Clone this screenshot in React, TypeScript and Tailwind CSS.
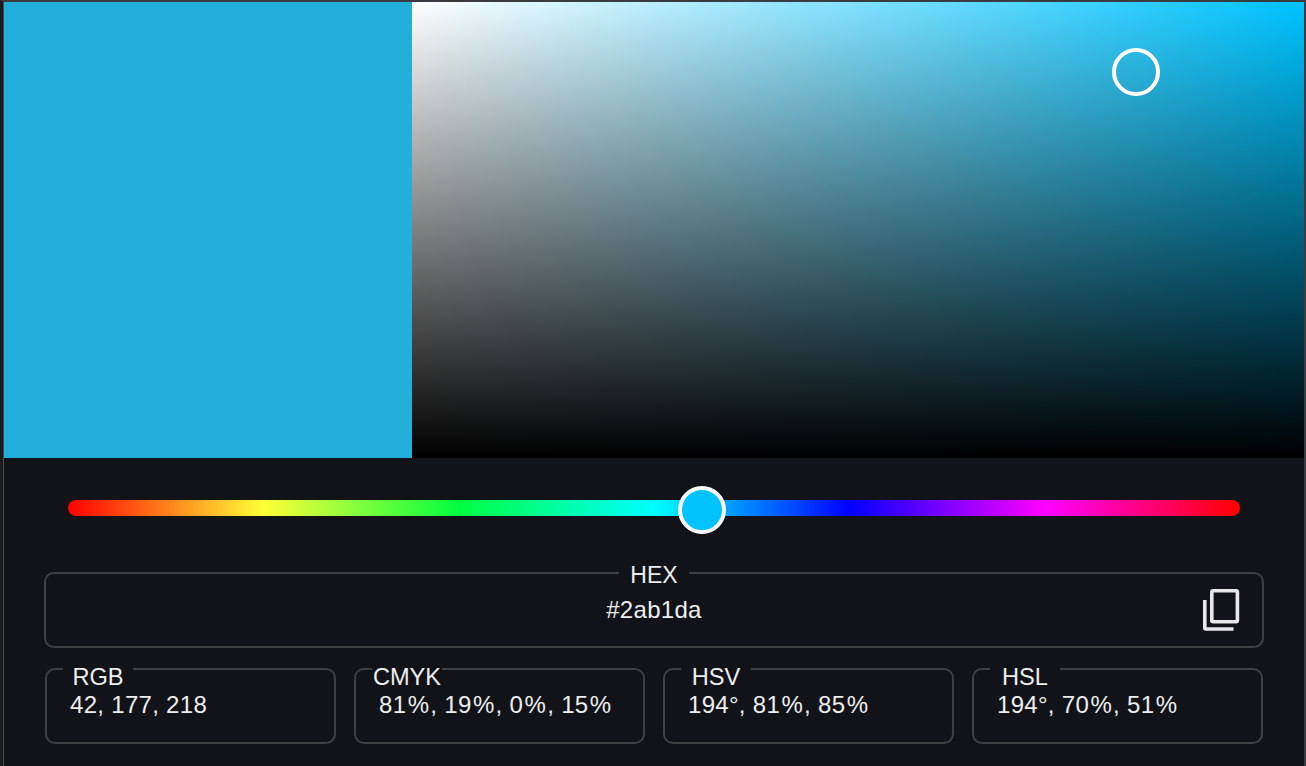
import { useState } from "react"

type ColorField = {
  label: string
  value: string
}

const fields: ColorField[] = [
  { label: "RGB", value: "42, 177, 218" },
  { label: "CMYK", value: "81%, 19%, 0%, 15%" },
  { label: "HSV", value: "194°, 81%, 85%" },
  { label: "HSL", value: "194°, 70%, 51%" },
]

function CopyIcon() {
  return (
    <svg width="37" height="42" viewBox="0 0 37 42" fill="none" stroke="#e8e8e8" strokeWidth="3.6">
      <rect x="8.8" y="1.8" width="25.6" height="31" rx="1.5" />
      <path d="M1.8 11v28a1 1 0 0 0 1 1H30.5" />
    </svg>
  )
}

function Field({ label, value }: ColorField) {
  return (
    <fieldset className="h-[95px] rounded-[10px] border-2 border-[#3f4044]">
      <legend className="ml-[16px] w-[70px] pt-4 text-[23.6px] leading-[24px] text-[#eeeeee]">
        <div className="flex justify-center whitespace-nowrap">{label}</div>
      </legend>
      <div className="whitespace-nowrap pl-[23px] pt-[4px] text-[24px] leading-[24px] tracking-[0.3px] text-[#eeeeee]">
        {value.split(/(%)/).map((part, i) =>
          part === "%" ? (
            <span key={i} className="ml-[1.4px] mr-[1px]">
              %
            </span>
          ) : (
            part
          ),
        )}
      </div>
    </fieldset>
  )
}

export default function App() {
  const [hex] = useState("#2ab1da")

  return (
    <div className="h-[766px] w-[1306px] overflow-hidden border-t-2 border-r-2 border-l-[3px] border-t-[#3a3b3e] border-r-[#3a3b3e] border-l-[#1b1c20] bg-[#111319] font-['Liberation_Sans',Arial,sans-serif]">
      <div className="h-full border-l border-[#4a4b4f]">
        <div className="flex h-[456px]">
          <div className="w-[408px] bg-[#22b0da]" />
          <div className="relative flex-1 bg-[#00c3ff]">
            <div className="absolute inset-0 bg-[linear-gradient(to_right,#ffffff,rgba(255,255,255,0))]" />
            <div className="absolute inset-0 bg-[linear-gradient(to_top,#000000,rgba(0,0,0,0))]" />
            <div className="absolute left-[700px] top-[46px] h-12 w-12 rounded-full border-4 border-white" />
          </div>
        </div>

        <div className="relative mx-[64px] mt-[42px] h-4 w-[1172px] rounded-full bg-[linear-gradient(to_right,#ff0000,#ffff38,#00ff40,#00ffff,#0000ff,#ff00ff,#ff0000)]">
          <div className="absolute left-[610px] top-[-14px] h-12 w-12 rounded-full border-4 border-white bg-[#00c3ff]" />
        </div>

        <fieldset className="ml-[40px] mt-[43px] h-[89px] w-[1220px] rounded-[10px] border-2 border-[#3f4044] px-[10px]">
          <legend className="mx-auto w-[70px] pt-[4px] text-[23px] leading-[24px] text-[#eeeeee]">
            <div className="text-center">HEX</div>
          </legend>
          <div className="grid grid-cols-[1fr_auto_1fr] items-start">
            <div />
            <div className="pt-[11px] text-[24px] leading-[24px] tracking-[0.3px] text-[#eeeeee]">{hex}</div>
            <div className="flex justify-end pr-[12px] pt-[2px]">
              <CopyIcon />
            </div>
          </div>
        </fieldset>

        <div className="ml-[41px] mt-[1px] grid w-[1218px] grid-cols-4 gap-[18px]">
          {fields.map((field) => (
            <Field key={field.label} label={field.label} value={field.value} />
          ))}
        </div>
      </div>
    </div>
  )
}
